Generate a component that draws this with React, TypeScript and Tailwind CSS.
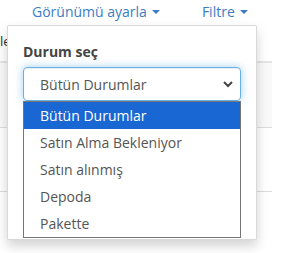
import { useState } from 'react';

const options = ['Bütün Durumlar', 'Satın Alma Bekleniyor', 'Satın alınmış', 'Depoda', 'Pakette'];

function Caret() {
  return <span className="ml-[5px] inline-block h-0 w-0 border-x-[4px] border-t-[4px] border-x-transparent border-t-current align-middle" />;
}

export default function App() {
  const [selected] = useState(0);

  return (
    <div className="relative h-[253px] w-[283px] overflow-hidden bg-white" style={{ fontFamily: '"Open Sans", sans-serif' }}>
      {/* Toolbar */}
      <div className="flex h-[23px] items-center text-[14px] text-[#3a7dc4]">
        <span className="ml-[32px] flex items-center">Görünümü ayarla<Caret /></span>
        <span className="ml-[42px] flex items-center">Filtre<Caret /></span>
      </div>

      {/* Table behind */}
      <div className="w-[272px]">
        <div className="flex h-[40px] items-center border-b-2 border-[#e5e5e5] text-[13px] text-[#333]">
          <span>le</span>
        </div>
        <div className="h-[65px] border-b border-[#ddd] bg-[#f9f9f9]" />
        <div className="h-[64px] border-b border-[#ddd]" />
      </div>

      {/* Dropdown panel */}
      <div className="absolute left-[7px] top-[25px] h-[215px] w-[250px] rounded-[2px] border border-black/15 bg-white shadow-[0_6px_12px_rgba(0,0,0,0.175)]">
        <div className="pl-[15px] pt-[16px]">
          <div className="text-[14px] font-bold leading-[20px] text-[#444]">Durum seç</div>
          <div className="mt-[5px] flex h-[34px] w-[218px] items-center justify-between rounded-[4px] border border-[#66afe9] pl-[16px] pr-[6px] text-[14px] text-[#555] shadow-[inset_0_1px_1px_rgba(0,0,0,0.075),0_0_8px_rgba(102,175,233,0.6)]">
            <span>{options[selected]}</span>
            <svg width="12" height="12" viewBox="0 0 12 12" className="text-[#444]">
              <path d="M2 4 L6 8 L10 4" fill="none" stroke="currentColor" strokeWidth="2" />
            </svg>
          </div>
          <ul className="w-[218px] border border-[#767676] bg-white text-[14px]">
            {options.map((o, i) => (
              <li
                key={o}
                className={`flex h-[27px] items-center pl-[16px] ${i === selected ? 'bg-[#1967d2] text-white' : 'text-[#555]'}`}
              >
                {o}
              </li>
            ))}
          </ul>
        </div>
      </div>
    </div>
  );
}
